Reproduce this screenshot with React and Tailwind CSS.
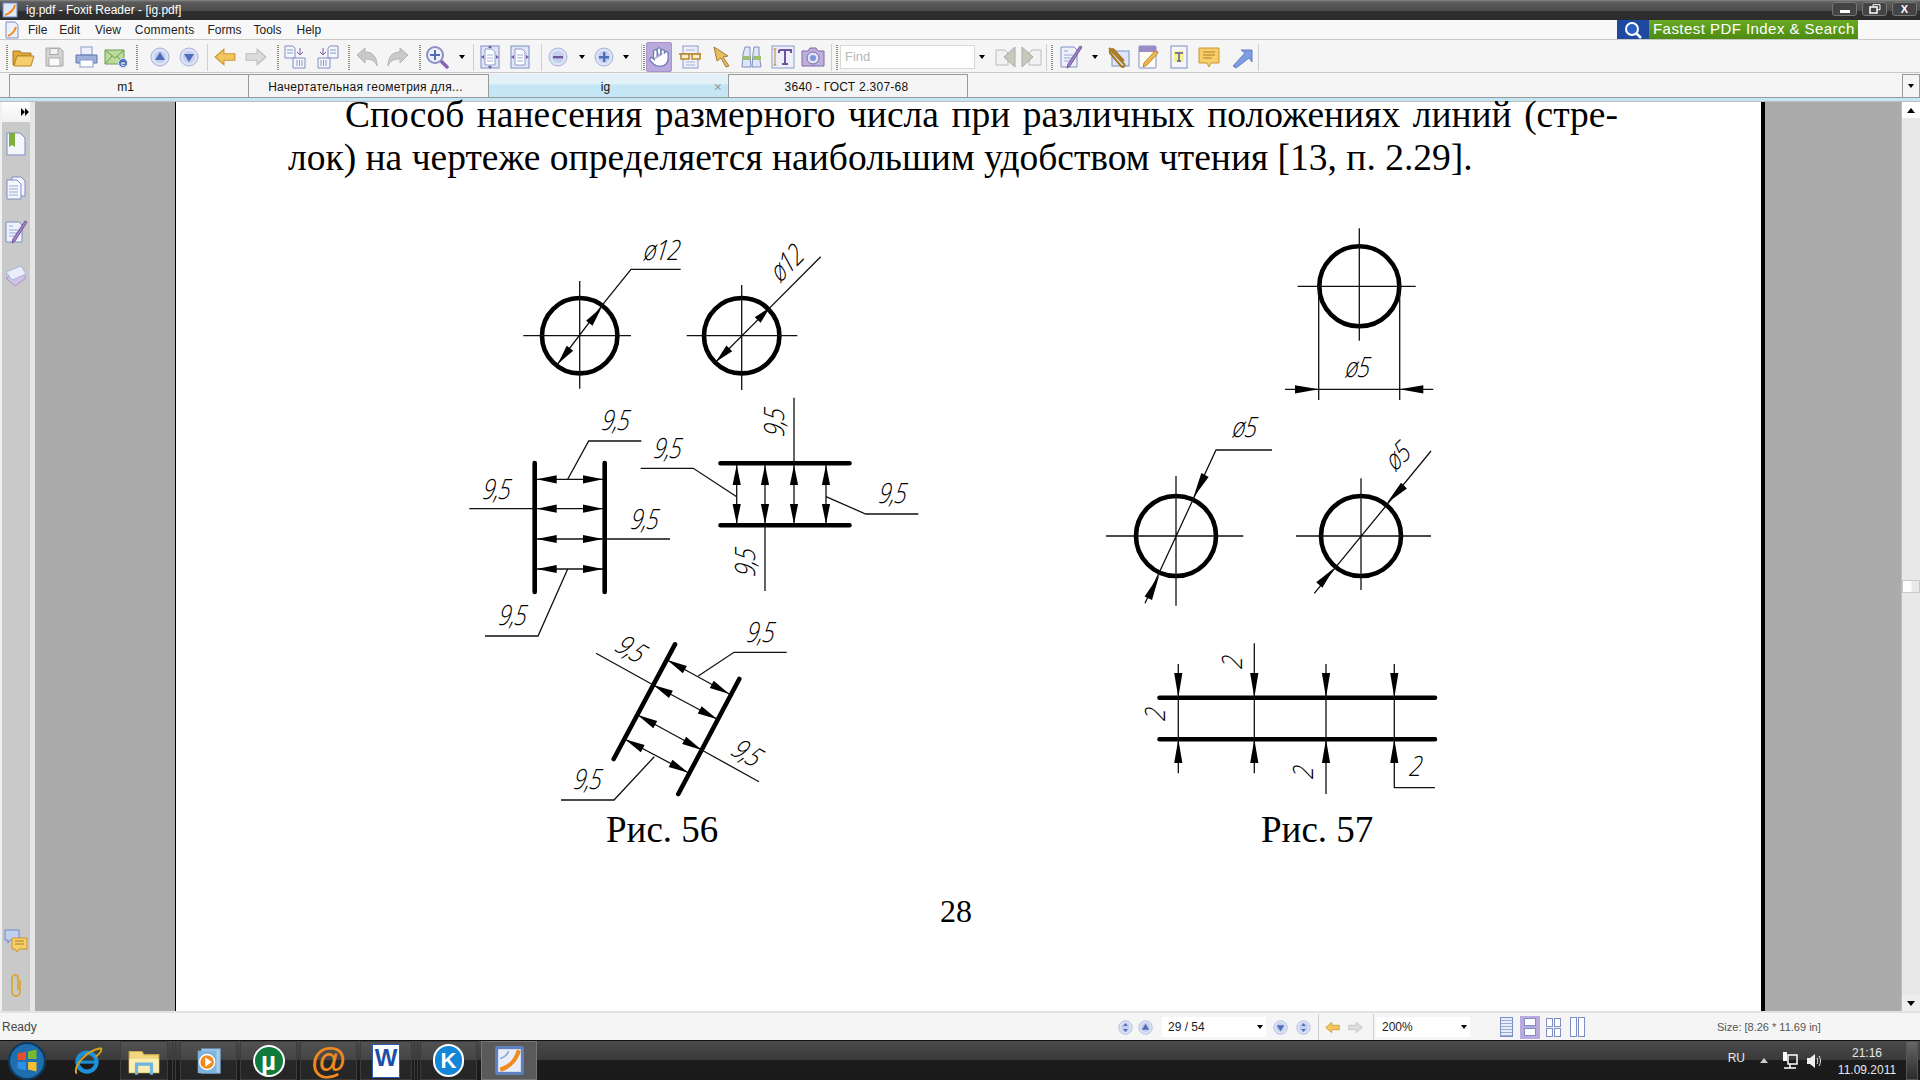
import { Hand } from 'lucide-react';

const Arrow = ({ x, y, bx, by, w = 4.1 }) => {
  const dx = bx - x;
  const dy = by - y;
  const len = Math.hypot(dx, dy);
  const nx = (-dy / len) * w;
  const ny = (dx / len) * w;
  return <polygon points={`${x},${y} ${bx + nx},${by + ny} ${bx - nx},${by - ny}`} fill="#000" />;
};

const Thin = ({ d }) => <path d={d} fill="none" stroke="#111" strokeWidth="1.3" />;
const Thick = ({ d }) => <path d={d} fill="none" stroke="#000" strokeWidth="4.6" strokeLinecap="round" />;
const Ring = ({ x, y, r }) => <circle cx={x} cy={y} r={r} fill="none" stroke="#000" strokeWidth="4.6" />;

const Dim = ({ x, y, a = 0, children }) => (
  <text
    textAnchor="middle"
    dominantBaseline="central"
    transform={`translate(${x} ${y}) rotate(${a}) skewX(-7) scale(0.92 1.12)`}
    className="font-['Open_Sans',sans-serif] italic font-light text-[25px] tracking-[-1px] fill-black"
  >
    {children}
  </text>
);

// double arrow between two points, with heads 20px long
const Both = ({ x1, y1, x2, y2, l = 20 }) => {
  const len = Math.hypot(x2 - x1, y2 - y1);
  const ux = ((x2 - x1) / len) * l;
  const uy = ((y2 - y1) / len) * l;
  return (
    <>
      <Thin d={`M${x1} ${y1}L${x2} ${y2}`} />
      <Arrow x={x1} y={y1} bx={x1 + ux} by={y1 + uy} />
      <Arrow x={x2} y={y2} bx={x2 - ux} by={y2 - uy} />
    </>
  );
};

const Figure56 = () => (
  <svg viewBox="460 220 480 588" className="w-[480px] h-[588px] shrink-0">
    <Ring x={579.7} y={335.7} r={37.7} />
    <Thin d="M523.3 335.7H631M579.7 281V388.7M557.7 364L605 301.7L631 269.3H680.7" />
    <Arrow x={601.7} y={307.3} bx={589.3} by={323.3} />
    <Arrow x={557.7} y={364} bx={570} by={348.3} />
    <Dim x={662} y={249}>ø12</Dim>

    <Ring x={741.7} y={335.7} r={37.7} />
    <Thin d="M686.7 335.7H797.3M741.7 285V390M716 361.7L820.7 256.7" />
    <Arrow x={770} y={307.3} bx={757.7} by={320} />
    <Arrow x={716} y={361.7} bx={729.3} by={348.3} />
    <Dim x={786} y={262} a={-45}>ø12</Dim>

    <Thick d="M534.7 463V592M604.7 463V592" />
    <Both x1={536.7} y1={479.3} x2={603} y2={479.3} />
    <Both x1={536.7} y1={508.7} x2={603} y2={508.7} />
    <Both x1={536.7} y1={539} x2={603} y2={539} />
    <Both x1={536.7} y1={569} x2={603} y2={569} />
    <Thin d="M567.7 479.3L588.7 441H641.3M469.3 508.7H534.7M604.7 539H670M567.7 569L538 636H485" />
    <Dim x={616} y={419}>9,5</Dim>
    <Dim x={497} y={488}>9,5</Dim>
    <Dim x={645} y={518}>9,5</Dim>
    <Dim x={513} y={614}>9,5</Dim>

    <Thick d="M720.5 463.3H849.5M720.5 525.3H849.5" />
    <Both x1={736.7} y1={465} x2={736.7} y2={524} />
    <Both x1={765} y1={465} x2={765} y2={524} />
    <Both x1={794} y1={465} x2={794} y2={524} />
    <Both x1={826} y1={465} x2={826} y2={524} />
    <Thin d="M794 397.7V463M765 525V591M640.7 468.3H693.3L736.7 496.7M826 496.7L865.7 514H918.3" />
    <Dim x={773} y={422} a={-90}>9,5</Dim>
    <Dim x={744} y={562} a={-90}>9,5</Dim>
    <Dim x={668} y={447}>9,5</Dim>
    <Dim x={893} y={492}>9,5</Dim>

    <Thick d="M675 644.3L613.7 759M739.3 679L678.3 794" />
    <Both x1={667.3} y1={660} x2={729.3} y2={694} />
    <Both x1={653.3} y1={685} x2={717.3} y2={719.3} />
    <Both x1={637.7} y1={715} x2={701.7} y2={750} />
    <Both x1={625} y1={739.3} x2={688.3} y2={772.7} />
    <Thin d="M698.3 676L734 652.3H786.7M596 653.3L653.3 685M701.7 750L759 781.7M654.3 756.7L614 800H561" />
    <Dim x={761} y={631}>9,5</Dim>
    <Dim x={632} y={648} a={30}>9,5</Dim>
    <Dim x={748} y={752} a={30}>9,5</Dim>
    <Dim x={588} y={778}>9,5</Dim>
  </svg>
);

const Figure57 = () => (
  <svg viewBox="1090 220 370 588" className="w-[370px] h-[588px] shrink-0">
    <Ring x={1359.3} y={286.3} r={40} />
    <Thin d="M1297.7 286.3H1415.7M1359.3 228.3V340.7M1318.7 286.3V400M1399.7 286.3V400M1285 389.3H1433.3" />
    <Arrow x={1318.7} y={389.3} bx={1295} by={389.3} />
    <Arrow x={1399.7} y={389.3} bx={1423.3} by={389.3} />
    <Dim x={1358} y={366}>ø5</Dim>

    <Ring x={1176} y={536} r={40} />
    <Thin d="M1106 536H1243.3M1176 476V605.7M1145 603.3L1216 450H1272" />
    <Arrow x={1193.3} y={497.7} bx={1205} by={475} />
    <Arrow x={1159.3} y={575} bx={1148.3} by={598.3} />
    <Dim x={1245} y={426}>ø5</Dim>

    <Ring x={1361} y={536} r={40} />
    <Thin d="M1296 536H1431M1361 478.3V590M1314.3 593.3L1431 451" />
    <Arrow x={1386.7} y={503.3} bx={1404} by={485.7} />
    <Arrow x={1334} y={568.3} bx={1319.3} by={585} />
    <Dim x={1397} y={455} a={-45}>ø5</Dim>

    <Thick d="M1159.5 697.7H1435M1159.5 739.3H1435" />
    <Thin d="M1178.3 664V773.3M1254.3 643.3V773.3M1326 664V794M1394.3 664V787.7H1435" />
    <Arrow x={1178.3} y={697.7} bx={1178.3} by={673} />
    <Arrow x={1254.3} y={697.7} bx={1254.3} by={673} />
    <Arrow x={1326} y={697.7} bx={1326} by={673} />
    <Arrow x={1394.3} y={697.7} bx={1394.3} by={673} />
    <Arrow x={1178.3} y={739.3} bx={1178.3} by={763} />
    <Arrow x={1254.3} y={739.3} bx={1254.3} by={763} />
    <Arrow x={1326} y={739.3} bx={1326} by={763} />
    <Arrow x={1394.3} y={739.3} bx={1394.3} by={763} />
    <Dim x={1231} y={662} a={-90}>2</Dim>
    <Dim x={1154} y={714} a={-90}>2</Dim>
    <Dim x={1302} y={772} a={-90}>2</Dim>
    <Dim x={1416} y={765}>2</Dim>
  </svg>
);

// ---- toolbar icons ----
const Ico = ({ s = 24, children }) => (
  <svg viewBox="0 0 24 24" width={s} height={s} className="shrink-0">{children}</svg>
);
const Folder = () => (
  <Ico><path d="M2 6h7l2 2h9v3H6L3 20H2z" fill="#e0a93a" stroke="#a87a20" /><path d="M6 11h17l-3 10H3z" fill="#f6cf6a" stroke="#b5882c" /></Ico>
);
const Save = () => (
  <Ico><path d="M4 3h14l3 3v15H4z" fill="#d4d4d4" stroke="#aaa" /><rect x="8" y="3.5" width="8" height="6" fill="#f2f2f2" stroke="#aaa" /><rect x="7" y="13" width="11" height="8" fill="#fafafa" stroke="#aaa" /></Ico>
);
const Printer = () => (
  <Ico><rect x="7" y="2" width="11" height="8" fill="#eef" stroke="#8a9ac8" /><path d="M2 10h21v8H2z" fill="#9db1dc" stroke="#5f75aa" /><rect x="6" y="15" width="13" height="7" fill="#fff" stroke="#8a9ac8" /></Ico>
);
const Mail = () => (
  <Ico><path d="M1 5h19v14H1z" fill="#b9dc9a" stroke="#6f9a55" /><path d="M1 5l10 8 9-8M1 19l7-8M20 19l-7-8" fill="none" stroke="#6f9a55" /><circle cx="19" cy="18" r="4.5" fill="#4a6db8" stroke="#dfe6f5" /><text x="19" y="21" textAnchor="middle" className="text-[8px] fill-white">e</text></Ico>
);
const Round = ({ s = 20, kind }) => (
  <svg viewBox="0 0 20 20" width={s} height={s} className="shrink-0">
    <circle cx="10" cy="10" r="9" fill="#dce3f6" stroke="#a6b2de" />
    <circle cx="10" cy="10" r="6" fill="#c5cfee" />
    {kind === 'up' && <path d="M10 5l5 8H5z" fill="#4f6db8" />}
    {kind === 'down' && <path d="M10 15l5-8H5z" fill="#4f6db8" />}
    {kind === 'first' && <path d="M10 4l3 4H7zM10 16l3-4H7z" fill="#4f6db8" />}
    {kind === 'minus' && <rect x="5" y="9" width="10" height="2.4" fill="#6f5a9e" />}
    {kind === 'plus' && <path d="M9 5h2.4v4H15v2.4h-3.6V15H9v-3.6H5V9h4z" fill="#4f6db8" />}
  </svg>
);
const Fat = ({ s = 22, back, on }) => (
  <svg viewBox="0 0 20 20" width={s} height={s} className="shrink-0">
    <path
      d={back ? 'M1 10l8-7v4h10v6H9v4z' : 'M19 10l-8-7v4H1v6h10v4z'}
      fill={on ? '#f2c65c' : '#dcdcdc'}
      stroke={on ? '#c9962e' : '#bdbdbd'}
    />
  </svg>
);
const Sheets = ({ flip }) => (
  <Ico>
    <g transform={flip ? 'matrix(-1 0 0 1 24 0)' : undefined}>
      <path d="M1 1h8l2 2v10H1z" fill="#f4f6fc" stroke="#7f8fc0" />
      <path d="M9 13h12v10H9z" fill="#f4f6fc" stroke="#7f8fc0" />
      <path d="M13 15v6M15.500 15v6M18 15v6M3 5h6M3 8h6" stroke="#8b9bc9" />
      <path d="M16 3v6m-3-2l3 3 3-3" fill="none" stroke="#7b5ca8" />
    </g>
  </Ico>
);
const Curve = ({ flip }) => (
  <Ico>
    <path
      transform={flip ? 'matrix(-1 0 0 1 24 0)' : undefined}
      d="M2 10l8-7v4c8 0 12 5 12 14-2-5-5-7-12-7v4z"
      fill="#c9c9c9"
      stroke="#b5b5b5"
    />
  </Ico>
);
const Zoom = () => (
  <Ico>
    <path d="M15 15l7 7" stroke="#8a62b5" strokeWidth="3.500" strokeLinecap="round" />
    <circle cx="10" cy="10" r="8" fill="#eef1fb" stroke="#8a8fc5" strokeWidth="2" />
    <path d="M9 5h2v4h4v2h-4v4H9v-4H5V9h4z" fill="#4f6db8" />
  </Ico>
);
const Fit = ({ tall }) => (
  <Ico>
    <rect x="3" y="1" width="18" height="22" fill="#dfe6f8" stroke="#7d8fc4" />
    <path d="M7 4h7l3 3v13H7z" fill="#fff" stroke="#8b9bc9" />
    <path d="M9 10h6M9 13h6M9 16h6" stroke="#a3b0d8" />
    {tall && <path d="M12 0l2 3h-4zM12 24l2-3h-4z" fill="#7b5ca8" />}
    <path d="M3 12l3-2v4zM21 12l-3-2v4z" fill="#7b5ca8" />
  </Ico>
);
const Glasses = () => (
  <Ico>
    <rect x="5" y="1" width="15" height="22" fill="#eef1fb" stroke="#8b9bc9" />
    <path d="M8 5h9M8 17h9M8 20h9" stroke="#a3b0d8" />
    <path d="M1 9h22" stroke="#b8862a" strokeWidth="1.500" />
    <rect x="3" y="9" width="8" height="5" fill="#fbeec4" stroke="#b8862a" strokeWidth="1.500" />
    <rect x="14" y="9" width="8" height="5" fill="#fbeec4" stroke="#b8862a" strokeWidth="1.500" />
  </Ico>
);
const Cursor = () => (
  <Ico><path d="M4 2l14 9-5 1 6 9-3 1-5-9-4 3z" fill="#e8bd5d" stroke="#a07a30" /></Ico>
);
const Binoculars = () => (
  <Ico>
    <path d="M5 2h5v7l1 13H2l1-13zM14 2h5v7l2 13h-9l1-13z" fill="#dfe6f8" stroke="#7d8fc4" />
    <path d="M2.500 13h8M13 13h8" stroke="#9dc06a" strokeWidth="4" />
  </Ico>
);
const TextTool = () => (
  <Ico>
    <rect x="1" y="1" width="22" height="22" fill="#edf0fb" stroke="#8b9bc9" />
    <path d="M4 4v16M2.500 4h3M2.500 20h3" stroke="#b8862a" />
    <path d="M8 5h12v3M14 5v14M11 19h6M8 5v3" fill="none" stroke="#6a53a0" strokeWidth="2" />
  </Ico>
);
const Camera = () => (
  <Ico>
    <path d="M1 6h6l2-3h6l2 3h6v15H1z" fill="#bdaedb" stroke="#7d68a8" />
    <circle cx="12" cy="13" r="6" fill="#dfe6f8" stroke="#7d68a8" />
    <circle cx="12" cy="13" r="3" fill="#7d94d8" />
  </Ico>
);
const NotePen = ({ s = 24 }) => (
  <Ico s={s}>
    <path d="M2 2h13l3 3v17H2z" fill="#eef1fb" stroke="#7d8fc4" />
    <path d="M5 6h4M5 10h9M5 13h8M5 16h6" stroke="#9aa9d4" />
    <path d="M23 2L11 21l-3 2 1-4L21 1z" fill="#a184c9" stroke="#6f5596" />
  </Ico>
);
const Clip = () => (
  <Ico>
    <rect x="6" y="6" width="17" height="15" fill="#dfe6f8" stroke="#7d8fc4" />
    <path d="M3 3l15 16c2 2-1 4-3 2L4 8c-1-3 2-5 4-3l10 11" fill="none" stroke="#a87a20" strokeWidth="2" />
  </Ico>
);
const Pencil = () => (
  <Ico>
    <rect x="3" y="1" width="17" height="22" rx="1" fill="#fdfdf4" stroke="#7d8fc4" />
    <rect x="3" y="1" width="17" height="6" fill="#9b8cc7" />
    <path d="M22 8L11 20l-4 2 1-4L19 6z" fill="#f1b94c" stroke="#b8862a" />
    <path d="M22 8l-3-2 1-1 3 2z" fill="#e58a8a" />
  </Ico>
);
const TypeNote = () => (
  <Ico>
    <rect x="4" y="1" width="16" height="22" fill="#f4f6fc" stroke="#7d8fc4" />
    <rect x="7" y="6" width="10" height="11" fill="#f1f58f" />
    <path d="M8 8h8M12 8v8M10 16h4" stroke="#6a53a0" strokeWidth="1.500" fill="none" />
  </Ico>
);
const Comment = ({ s = 24 }) => (
  <Ico s={s}>
    <path d="M2 3h20v15h-8l-2 4-2-4H2z" fill="#f6cf6a" stroke="#c9962e" />
    <path d="M6 7h12M6 10h12M6 13h9" stroke="#b07f24" />
  </Ico>
);
const DiagArrow = () => (
  <Ico><path d="M3 21L15 8l-4-3h11v12l-3-4L6 23z" fill="#7d9de0" stroke="#5f7fc8" /></Ico>
);
const FindNav = ({ back }) => (
  <Ico>
    <path d="M3 5h9l3 3v12H3z" transform={back ? undefined : 'matrix(-1 0 0 1 24 0)'} fill="#f2f2f2" stroke="#bcbcbc" />
    <path d={back ? 'M22 2v20L11 12z' : 'M2 2v20l11-10z'} fill="#c9c8ba" stroke="#aaa" />
  </Ico>
);
const Caret = () => <span className="w-0 h-0 border-x-[3.5px] border-x-transparent border-t-[4px] border-t-black" />;

const Grip = ({ w }) => (
  <div className={`${w} h-[32px] flex justify-center items-center shrink-0`}>
    <div className="w-[2px] h-[25px] bg-[repeating-linear-gradient(to_bottom,#8d8d78_0_1px,transparent_1px_2px)]" />
  </div>
);
const Sep = ({ w }) => (
  <div className={`${w} h-[32px] flex justify-center items-center shrink-0`}>
    <div className="w-px h-[27px] bg-[#cfcfcf]" />
  </div>
);
const Slot = ({ w, children }) => (
  <div className={`${w} h-[32px] flex justify-center items-center shrink-0`}>{children}</div>
);

const Toolbar = () => (
  <div className="h-[33px] flex pl-1 pt-[1px] bg-[#f5f5f5] border-b border-[#c8c8c8]">
    <Grip w="w-[6px]" />
    <Slot w="w-[26px]"><Folder /></Slot>
    <Slot w="w-[36px]"><Save /></Slot>
    <Slot w="w-[28px]"><Printer /></Slot>
    <Slot w="w-[32px]"><Mail /></Slot>
    <Grip w="w-[10px]" />
    <Slot w="w-[36px]"><Round kind="up" /></Slot>
    <Slot w="w-[22px]"><Round kind="down" /></Slot>
    <Sep w="w-[14px]" />
    <Slot w="w-[22px]"><Fat back on /></Slot>
    <Slot w="w-[40px]"><Fat /></Slot>
    <Grip w="w-[4px]" />
    <Slot w="w-[32px]"><Sheets /></Slot>
    <Slot w="w-[30px]"><Sheets flip /></Slot>
    <Grip w="w-[14px]" />
    <Slot w="w-[22px]"><Curve /></Slot>
    <Slot w="w-[40px]"><Curve flip /></Slot>
    <Grip w="w-[4px]" />
    <Slot w="w-[30px]"><Zoom /></Slot>
    <Slot w="w-[20px]"><Caret /></Slot>
    <Sep w="w-[2px]" />
    <Slot w="w-[32px]"><Fit tall /></Slot>
    <Slot w="w-[28px]"><Fit /></Slot>
    <Sep w="w-[14px]" />
    <Slot w="w-[20px]"><Round kind="minus" /></Slot>
    <Slot w="w-[28px]"><Caret /></Slot>
    <Slot w="w-[16px]"><Round kind="plus" /></Slot>
    <Slot w="w-[28px]"><Caret /></Slot>
    <Sep w="w-[2px]" />
    <Grip w="w-[4px]" />
    <Slot w="w-[26px]">
      <div className="w-[26px] h-[30px] flex items-center justify-center bg-[#b9a9dc] rounded-[2px] border border-[#a693cf]">
        <Hand size={22} fill="#fff" stroke="#6f7fb5" strokeWidth={1.5} />
      </div>
    </Slot>
    <Slot w="w-[36px]"><Glasses /></Slot>
    <Slot w="w-[28px]"><Cursor /></Slot>
    <Slot w="w-[32px]"><Binoculars /></Slot>
    <Slot w="w-[30px]"><TextTool /></Slot>
    <Slot w="w-[30px]"><Camera /></Slot>
    <Sep w="w-[6px]" />
    <Grip w="w-[6px]" />
    <div className="w-[135px] h-[24px] mt-1 shrink-0 bg-white border border-[#d9d9d9] px-1 text-[13px] leading-[22px] text-[#b8b8b8]">Find</div>
    <Slot w="w-[14px]"><Caret /></Slot>
    <Slot w="w-[32px]"><FindNav back /></Slot>
    <Slot w="w-[22px]"><FindNav /></Slot>
    <Sep w="w-[7px]" />
    <Grip w="w-[4px]" />
    <Slot w="w-[34px]"><NotePen /></Slot>
    <Slot w="w-[14px]"><Caret /></Slot>
    <Slot w="w-[32px]"><Clip /></Slot>
    <Slot w="w-[28px]"><Pencil /></Slot>
    <Slot w="w-[34px]"><TypeNote /></Slot>
    <Slot w="w-[26px]"><Comment /></Slot>
    <div className="w-[5px] shrink-0" />
    <Slot w="w-[30px]"><DiagArrow /></Slot>
    <Sep w="w-[2px]" />
  </div>
);

const TitleBar = () => (
  <div className="h-[20px] flex items-center bg-[linear-gradient(to_bottom,#8a8a8a_0,#5c5c5c_2px,#4a4a4a_55%,#2f2f2f_56%,#2c2c2c_100%)] text-white">
    <svg viewBox="0 0 16 16" width="16" height="16" className="ml-[2px] shrink-0">
      <rect x="1" y="1" width="14" height="14" fill="#dfe6f5" stroke="#6e8ac5" />
      <path d="M3 13C9 11 12 7 13 3" fill="none" stroke="#ef8a1d" strokeWidth="2" />
    </svg>
    <span className="ml-2 text-[12px] font-medium">ig.pdf - Foxit Reader - [ig.pdf]</span>
    <div className="ml-auto flex gap-[5px] pr-[3px] -mt-[2px]">
      <div className="w-[25px] h-[14px] rounded-[3px] border border-[#777] bg-[#444] flex items-end justify-center pb-[2px]"><div className="w-[10px] h-[3px] bg-white" /></div>
      <div className="w-[25px] h-[14px] rounded-[3px] border border-[#777] bg-[#444] flex items-center justify-center">
        <svg viewBox="0 0 12 10" width="12" height="10">
          <path d="M4 2.500V.7h7v5H8.500" fill="none" stroke="#fff" />
          <rect x="1" y="3" width="7" height="6" fill="none" stroke="#fff" strokeWidth="1.500" />
        </svg>
      </div>
      <div className="w-[25px] h-[14px] rounded-[3px] border border-[#777] bg-[#444] flex items-center justify-center text-[11px] leading-none font-bold">X</div>
    </div>
  </div>
);

const MenuBar = () => (
  <div className="h-[20px] flex items-center bg-[#f8f8f8] border-b border-[#c8c8c8] text-[12px] text-[#222] relative">
    <svg viewBox="0 0 16 18" width="16" height="18" className="ml-[4px] shrink-0">
      <path d="M2 1h9l3 3v13H2z" fill="#eef1fb" stroke="#7d8fc4" />
      <path d="M4 15C9 13 11 9 12 6" fill="none" stroke="#ef8a1d" strokeWidth="2" />
    </svg>
    <span className="ml-[8px]">File</span>
    <span className="ml-[12px]">Edit</span>
    <span className="ml-[15px]">View</span>
    <span className="ml-[14px] tracking-[0.2px]">Comments</span>
    <span className="ml-[13px]">Forms</span>
    <span className="ml-[12px]">Tools</span>
    <span className="ml-[15px]">Help</span>
    <div className="ml-auto mr-[62px] w-[241px] h-[19px] flex items-center bg-[linear-gradient(to_bottom,#6aaa25,#4d8a12)]">
      <div className="w-[32px] h-full flex items-center justify-center bg-[#1d4aa0]">
        <svg viewBox="0 0 20 18" width="26" height="18">
          <circle cx="9" cy="8" r="6" fill="#2a62c4" stroke="#fff" strokeWidth="2" />
          <path d="M13 12l5 5" stroke="#fff" strokeWidth="2.500" />
        </svg>
      </div>
      <span className="ml-1 text-[15px] tracking-[0.45px] text-white whitespace-nowrap">Fastest PDF Index &amp; Search</span>
    </div>
  </div>
);

const Tabs = () => (
  <div className="h-[29px] bg-[#f5f5f5] shrink-0 flex flex-col">
    <div className="h-[25px] pl-[9px] flex items-stretch border-b border-[#999] text-[12px] text-[#111] pt-[1px] relative">
      <div className="w-[240px] flex items-center justify-center pt-[2px] pr-[7px] border-x border-t border-[#999]">m1</div>
      <div className="w-[240px] flex items-center justify-center pt-[2px] pr-[6px] tracking-[0.3px] border-r border-t border-[#999]">Начертательная геометрия для...</div>
      <div className="w-[239px] flex items-center justify-center pt-[2px] pr-[6px] relative bg-[linear-gradient(to_bottom,#e2f2f8_0,#e2f2f8_45%,#c5e6f4_46%,#c5e6f4_100%)]">
        ig
        <span className="absolute right-[6px] text-[14px] leading-none text-[#999]">×</span>
      </div>
      <div className="w-[240px] flex items-center justify-center pt-[2px] pr-[3px] border-x border-t border-[#999] tracking-[0.25px]">3640 - ГОСТ 2.307-68</div>
      <div className="ml-auto w-[18px] flex items-center justify-center border-x border-t border-[#999]"><Caret /></div>
    </div>
    <div className="h-[4px] bg-[#c5e6f4] border-b border-[#bbb]" />
  </div>
);

const SideSlot = ({ children }) => (
  <div className="h-[44px] flex items-center justify-center">{children}</div>
);

const Sidebar = () => (
  <div className="w-[35px] shrink-0 bg-[#f0f0f0] pl-[2px] flex">
    <div className="w-[28px] bg-[#c9c9c9] flex flex-col">
      <div className="h-[20px] bg-[linear-gradient(to_bottom,#fff,#f0f0f0)] flex items-center justify-end pr-[1px] text-black">
        <span className="w-0 h-0 border-y-[4px] border-y-transparent border-l-[4px] border-l-black" />
        <span className="w-0 h-0 border-y-[4px] border-y-transparent border-l-[4px] border-l-black" />
      </div>
      <SideSlot>
        <Ico><path d="M3 1h13l5 5v17H3z" fill="#f4f6fc" stroke="#7d8fc4" /><path d="M5 1h6v14l-3-2-3 2z" fill="#7fae3f" /></Ico>
      </SideSlot>
      <SideSlot>
        <Ico><path d="M8 1h9l4 4v15H8z" fill="#f4f6fc" stroke="#7d8fc4" /><path d="M3 4h10l4 4v15H3z" fill="#f4f6fc" stroke="#7d8fc4" /><path d="M5 10h9M5 13h9M5 16h9M5 19h9" stroke="#9aa9d4" /></Ico>
      </SideSlot>
      <SideSlot><NotePen /></SideSlot>
      <SideSlot>
        <Ico><path d="M2 14L15 7l7 7-11 8z" fill="#cfc2e6" stroke="#a893cf" /><path d="M2 8l15-6 5 8-14 6z" fill="#e9edf9" stroke="#a9b6e0" /></Ico>
      </SideSlot>
      <div className="mt-auto flex flex-col pb-[4px]">
        <SideSlot>
          <svg viewBox="0 0 24 24" width="24" height="24">
            <path d="M1 1h14v10H6l-2 3v-3H1z" fill="#c3cff1" stroke="#6e8ac5" />
            <path d="M8 9h15v11h-8l-2 3-2-3H8z" fill="#f6cf6a" stroke="#c9962e" />
            <path d="M11 12h9M11 15h9" stroke="#b07f24" />
          </svg>
        </SideSlot>
        <SideSlot>
          <svg viewBox="0 0 16 24" width="16" height="24">
            <path d="M12 7v12a4 4 0 0 1-8 0V5a3 3 0 0 1 6 0v12" fill="none" stroke="#d8a937" strokeWidth="1.800" />
          </svg>
        </SideSlot>
      </div>
    </div>
    <div className="w-[5px] bg-[#e6e6e6]" />
  </div>
);

const Scrollbar = () => (
  <div className="w-[19px] shrink-0 bg-[#e8e8e8] flex flex-col border-l border-[#bdbdbd]">
    <div className="h-[16px] bg-white flex items-center justify-center"><span className="w-0 h-0 border-x-[4px] border-x-transparent border-b-[5px] border-b-black" /></div>
    <div className="mt-[462px] h-[13px] bg-[linear-gradient(to_right,#fff_45%,#e8e8e8_60%)] border border-[#c8c8c8]" />
    <div className="mt-auto h-[16px] bg-[#eee] flex items-center justify-center"><span className="w-0 h-0 border-x-[4px] border-x-transparent border-t-[5px] border-t-black" /></div>
  </div>
);

const Page = () => (
  <div className="ml-[140px] w-[1590px] h-full shrink-0 bg-white border-l border-black border-r-4 border-r-black font-['Liberation_Serif',serif] text-black">
    <div className="ml-[169px] w-[1273px] text-[37.500px] leading-[26px] text-justify [text-align-last:justify] whitespace-nowrap">
      Способ нанесения размерного числа при различных положениях линий (стре-
    </div>
    <div className="mt-[8px] ml-[112px] text-[37.500px] leading-[43px] whitespace-nowrap">
      лок) на чертеже определяется наибольшим удобством чтения [13, п. 2.29].
    </div>
    <div className="mt-[41px] ml-[284px] flex gap-[150px]">
      <div className="flex flex-col">
        <Figure56 />
        <p className="pl-[146px] text-[37px] leading-[44px]">Рис. 56</p>
      </div>
      <div className="flex flex-col">
        <Figure57 />
        <p className="pl-[171px] text-[37px] leading-[44px]">Рис. 57</p>
      </div>
    </div>
    <p className="mt-[37px] ml-[764px] text-[32px] leading-[44px]">28</p>
  </div>
);

const StatusBar = () => (
  <div className="h-[29px] shrink-0 flex items-center pt-[1px] bg-[#f5f5f5] border-t-2 border-[#e2e2e2] text-[12px] text-[#444] pl-[2px]">
    <span className="w-[1114px] shrink-0">Ready</span>
    <Slot w="w-[18px]"><Round s={15} kind="first" /></Slot>
    <Slot w="w-[23px]"><Round s={15} kind="up" /></Slot>
    <div className="w-[104px] h-[20px] ml-[5px] shrink-0 bg-white flex items-center justify-between pl-[6px] pr-[3px] text-[#222]">29 / 54<Caret /></div>
    <Slot w="w-[28px]"><Round s={15} kind="down" /></Slot>
    <Slot w="w-[18px]"><Round s={15} kind="first" /></Slot>
    <Sep w="w-[12px]" />
    <Slot w="w-[16px]"><Fat s={15} back on /></Slot>
    <Slot w="w-[30px]"><Fat s={15} /></Slot>
    <Sep w="w-[6px]" />
    <div className="w-[94px] h-[20px] shrink-0 bg-white flex items-center justify-between pl-[6px] pr-[3px] text-[#222]">200%<Caret /></div>
    <div className="w-[24px] shrink-0" />
    <Slot w="w-[24px]"><div className="w-[13px] h-[20px] border border-[#7d8fc4] bg-[repeating-linear-gradient(to_bottom,#e8edfa_0_2px,#9aa9d4_2px_3px)]" /></Slot>
    <Slot w="w-[24px]"><div className="w-[20px] h-[23px] bg-[#b9a9dc] flex flex-col gap-[2px] items-center justify-center"><div className="w-[12px] h-[8px] bg-white border border-[#7d8fc4]" /><div className="w-[12px] h-[8px] bg-white border border-[#7d8fc4]" /></div></Slot>
    <Slot w="w-[23px]"><div className="grid grid-cols-2 gap-[1px]"><div className="w-[7px] h-[9px] bg-white border border-[#7d8fc4]" /><div className="w-[7px] h-[9px] bg-white border border-[#7d8fc4]" /><div className="w-[7px] h-[9px] bg-white border border-[#7d8fc4]" /><div className="w-[7px] h-[9px] bg-white border border-[#7d8fc4]" /></div></Slot>
    <Slot w="w-[24px]"><div className="flex gap-[1px]"><div className="w-[7px] h-[20px] bg-white border border-[#7d8fc4]" /><div className="w-[7px] h-[20px] bg-white border border-[#7d8fc4]" /></div></Slot>
    <span className="ml-[128px] text-[11px] whitespace-nowrap text-[#555]">Size: [8.26 * 11.69 in]</span>
  </div>
);

const TaskBtn = ({ w, active, children }) => (
  <div className={`${w} h-full shrink-0 flex items-center justify-center border border-[#3c3c3c] ${active ? 'bg-[#5a5a5a] border-[#777]' : 'bg-white/5'}`}>
    {children}
  </div>
);

const Taskbar = () => (
  <div className="h-[40px] shrink-0 flex items-stretch text-white bg-[linear-gradient(to_bottom,#4a4a4a_0,#3a3a3a_48%,#1c1c1c_50%,#1a1a1a_100%)] border-t border-[#111]">
    <div className="w-[54px] shrink-0 flex items-center justify-center">
      <svg viewBox="0 0 36 36" width="38" height="38">
        <circle cx="18" cy="18" r="17" fill="#1f6fb0" stroke="#0c3a60" strokeWidth="2" />
        <path d="M9 11l8-2v8H9z" fill="#e2512b" />
        <path d="M19 9l8-2v9h-8z" fill="#7cb82f" />
        <path d="M9 19h8v8l-8-2z" fill="#2f8fe0" />
        <path d="M19 19h8v9l-8-2z" fill="#f2c02e" />
      </svg>
    </div>
    <div className="w-[66px] shrink-0 flex items-center justify-center">
      <svg viewBox="0 0 32 32" width="34" height="34">
        <circle cx="16" cy="17" r="9" fill="none" stroke="#1e90d8" strokeWidth="4" />
        <path d="M9 17h15" stroke="#1e90d8" strokeWidth="3" />
        <path d="M6 28C3 20 16 6 29 4c2 2-2 6-5 8" fill="none" stroke="#d6a21e" strokeWidth="1.800" />
      </svg>
    </div>
    <TaskBtn w="w-[48px]">
      <svg viewBox="0 0 32 32" width="34" height="34">
        <path d="M2 7h12l2 3h14v17H2z" fill="#f2d77e" stroke="#c9a84a" />
        <path d="M2 14h28v13H2z" fill="#fbeeb0" />
        <path d="M9 29V19h14v10" fill="none" stroke="#6fb5e0" strokeWidth="3" />
      </svg>
    </TaskBtn>
    <div className="w-[12px] shrink-0 flex justify-center"><div className="w-[4px] h-full border-x border-[#3c3c3c]" /></div>
    <TaskBtn w="w-[57px]">
      <svg viewBox="0 0 32 32" width="30" height="30">
        <rect x="8" y="3" width="20" height="26" fill="#a6cdea" stroke="#6f9cc4" />
        <rect x="4" y="5" width="20" height="24" fill="#7fb3dc" />
        <circle cx="14" cy="17" r="8" fill="#f08a1d" stroke="#fff" strokeWidth="1.500" />
        <path d="M12 12l7 5-7 5z" fill="#fff" />
      </svg>
    </TaskBtn>
    <div className="w-[3px] shrink-0" />
    <TaskBtn w="w-[57px]">
      <div className="w-[32px] h-[32px] rounded-full bg-[#0e7a3c] border-2 border-white flex items-center justify-center text-[26px] leading-none font-bold font-['Liberation_Sans',sans-serif]">µ</div>
    </TaskBtn>
    <div className="w-[3px] shrink-0" />
    <TaskBtn w="w-[57px]">
      <span className="text-[36px] leading-none font-bold text-[#ee8a1f] font-['Liberation_Sans',sans-serif]">@</span>
    </TaskBtn>
    <div className="w-[3px] shrink-0" />
    <TaskBtn w="w-[52px]">
      <div className="w-[28px] h-[34px] bg-white border border-[#2a5cb0] flex items-start justify-center text-[24px] leading-[26px] font-bold text-[#1d4fa8] font-['Liberation_Sans',sans-serif]">W</div>
    </TaskBtn>
    <div className="w-[8px] shrink-0 flex justify-center"><div className="w-[4px] h-full border-x border-[#3c3c3c]" /></div>
    <TaskBtn w="w-[57px]">
      <div className="w-[31px] h-[33px] rounded-full bg-[#1486d8] border-2 border-white flex items-center justify-center text-[22px] leading-none font-bold font-['Liberation_Sans',sans-serif]">K</div>
    </TaskBtn>
    <div className="w-[4px] shrink-0" />
    <TaskBtn w="w-[56px]" active>
      <svg viewBox="0 0 32 32" width="33" height="33">
        <rect x="2" y="2" width="28" height="28" rx="2" fill="#5e7fc0" />
        <rect x="5" y="5" width="22" height="22" fill="#e8edf8" />
        <path d="M7 25C17 22 23 14 25 6" fill="none" stroke="#f08a1d" strokeWidth="4" />
        <path d="M7 14C11 13 14 10 15 7" fill="none" stroke="#8aa0d0" strokeWidth="1.500" />
      </svg>
    </TaskBtn>
    <div className="ml-auto flex items-center text-[12px] text-[#e8e8e8]">
      <span className="-mt-[6px]">RU</span>
      <span className="ml-[15px] w-0 h-0 border-x-[4px] border-x-transparent border-b-[5px] border-b-[#ccc]" />
      <svg viewBox="0 0 18 20" width="18" height="20" className="ml-[13px]">
        <rect x="2" y="1" width="4" height="9" fill="#fff" />
        <rect x="7" y="4" width="9" height="9" fill="none" stroke="#fff" strokeWidth="1.500" />
        <path d="M3 17h12M9 13v4" stroke="#fff" strokeWidth="1.500" />
      </svg>
      <svg viewBox="0 0 18 18" width="18" height="18" className="ml-[6px]">
        <path d="M2 6h3l5-4v14l-5-4H2z" fill="#eee" />
        <path d="M12 6c1 2 1 4 0 6M14 4c2 3 2 7 0 10" fill="none" stroke="#eee" />
      </svg>
      <div className="ml-[7px] pt-[2px] w-[74px] flex flex-col items-center text-[12px] leading-[17px]">
        <span>21:16</span>
        <span>11.09.2011</span>
      </div>
      <div className="ml-[2px] mr-[2px] w-[12px] h-full bg-[linear-gradient(to_bottom,#666,#2b2b2b)] border border-[#555]" />
    </div>
  </div>
);

export default function App() {
  return (
    <div className="w-[1920px] h-[1080px] overflow-hidden flex flex-col bg-[#ababab] font-['Liberation_Sans',sans-serif]">
      <TitleBar />
      <MenuBar />
      <Toolbar />
      <Tabs />
      <div className="flex-1 min-h-0 flex bg-[#ababab]">
        <Sidebar />
        <div className="flex-1 min-w-0 h-full">
          <Page />
        </div>
        <Scrollbar />
      </div>
      <StatusBar />
      <Taskbar />
    </div>
  );
}
